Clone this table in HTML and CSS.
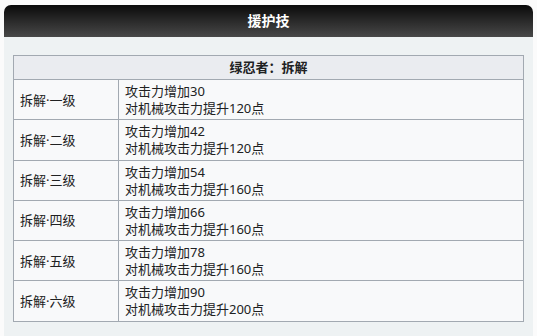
FILE: index.html
```html
<!DOCTYPE html>
<html lang="zh">
<head>
<meta charset="utf-8">
<link rel="stylesheet" href="styles.css">
</head>
<body>
<div class="box">
  <div class="title">援护技</div>
  <div class="panel">
    <table class="skills">
      <tr><th colspan="2">绿忍者：拆解</th></tr>
      <tr><td class="name">拆解·一级</td><td>攻击力增加30<br>对机械攻击力提升120点</td></tr>
      <tr><td class="name">拆解·二级</td><td>攻击力增加42<br>对机械攻击力提升120点</td></tr>
      <tr><td class="name">拆解·三级</td><td>攻击力增加54<br>对机械攻击力提升160点</td></tr>
      <tr><td class="name">拆解·四级</td><td>攻击力增加66<br>对机械攻击力提升160点</td></tr>
      <tr><td class="name">拆解·五级</td><td>攻击力增加78<br>对机械攻击力提升160点</td></tr>
      <tr><td class="name">拆解·六级</td><td>攻击力增加90<br>对机械攻击力提升200点</td></tr>
    </table>
  </div>
</div>
</body>
</html>
```
FILE: styles.css
```css
html, body {
  margin: 0;
  padding: 0;
  background: #fbfbfb;
  height: 100%;
  overflow: hidden;
}
body {
  font-family: "Noto Sans", "Noto Sans CJK SC", sans-serif;
  font-size: 13px;
  color: #202122;
}
.box {
  margin: 5px 4px 0 4px;
  width: 529px;
}
.title {
  height: 32px;
  line-height: 32px;
  text-align: center;
  color: #ffffff;
  font-weight: bold;
  font-size: 14px;
  border-radius: 7px 7px 0 0;
  background: linear-gradient(to bottom, #0a0a0a 0%, #2a2a2a 50%, #484848 100%);
}
.panel {
  background: #eef2f3;
  padding: 18px 10px 20px 9px;
}
.skills {
  width: 511px;
  border-collapse: collapse;
  background: #f8f9fa;
  border: 1px solid #a2a9b1;
}
.skills th {
  background: #eaecf0;
  border: 1px solid #a2a9b1;
  font-weight: bold;
  height: 23px;
  padding: 0;
  line-height: 23px;
  text-align: center;
}
.skills td {
  border: 1px solid #a2a9b1;
  padding: 3px 6px 2.3px 6px;
  line-height: 17px;
  vertical-align: middle;
}
.skills td.name {
  width: 92px;
}
```
